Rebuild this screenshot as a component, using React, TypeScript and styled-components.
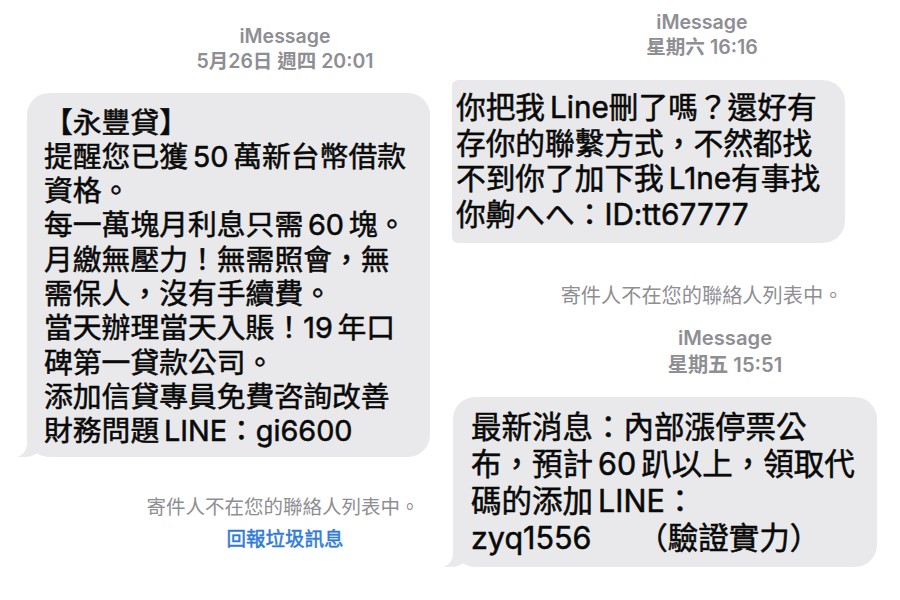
import styled, { createGlobalStyle } from "styled-components";

const GlobalStyle = createGlobalStyle`
  html, body {
    margin: 0;
    padding: 0;
    background: #fff;
  }
  body {
    width: 900px;
    height: 600px;
    overflow: hidden;
    font-family: Inter, "Noto Sans CJK TC", sans-serif;
  }
`

const Page = styled.div`
  display: grid;
  grid-template-columns: 450px 450px;
  width: 900px;
  height: 600px;
`
const Column = styled.div`
  display: flex;
  flex-direction: column;
`
const Shot = styled.section<{ $top: number }>`
  display: flex;
  flex-direction: column;
  align-items: flex-start;
  padding-top: ${p => p.$top}px;
`
const Header = styled.header<{ $shift: number; $size: number; $lh: number }>`
  align-self: stretch;
  padding-left: ${p => p.$shift}px;
  text-align: center;
  color: #8e8e93;
  font-size: ${p => p.$size}px;
  line-height: ${p => p.$lh}px;
  font-weight: 600;
`
const Bubble = styled.div<{
  $left: number; $width: number; $gap: number; $size: number; $lh: number;
  $pad: string; $radius?: string; $tail?: boolean;
}>`
  position: relative;
  box-sizing: border-box;
  margin: ${p => p.$gap}px 0 0 ${p => p.$left}px;
  width: ${p => p.$width}px;
  padding: ${p => p.$pad};
  background: #e9e9eb;
  border-radius: ${p => p.$radius || "22px"};
  color: #0a0a0a;
  font-size: ${p => p.$size}px;
  line-height: ${p => p.$lh}px;
  ${p => p.$tail && `
    &::before {
      content: "";
      position: absolute;
      left: -9px;
      bottom: 0;
      width: 24px;
      height: 22px;
      background: #e9e9eb;
      border-bottom-right-radius: 18px 12px;
    }
    &::after {
      content: "";
      position: absolute;
      left: -28px;
      bottom: 0;
      width: 28px;
      height: 22px;
      background: #fff;
      border-bottom-right-radius: 12px 14px;
    }
  `}
`
// iOS draws this text a touch heavier than Noto's regular cut
const Line = styled.div`
  position: relative;
  z-index: 1;
  white-space: pre;
  -webkit-text-stroke: 0.55px #0a0a0a;
`
const Note = styled.p<{ $shift: number; $size: number; $gap: number }>`
  align-self: stretch;
  margin: ${p => p.$gap}px 0 0;
  padding-left: ${p => p.$shift}px;
  text-align: center;
  color: #8e8e93;
  font-size: ${p => p.$size}px;
  line-height: 25px;
`
const Report = styled.a<{ $shift: number }>`
  align-self: stretch;
  display: block;
  margin-top: 7px;
  padding-left: ${p => p.$shift}px;
  text-align: center;
  color: #2f7bd6;
  font-size: 19.5px;
  line-height: 25px;
  text-decoration: none;
  -webkit-text-stroke: 0.5px #2f7bd6;
`

const loanLines = [
  "【永豐貸】",
  "提醒您已獲\u200650\u2006萬新台幣借款",
  "資格。",
  "每一萬塊月利息只需\u200660\u2006塊。",
  "月繳無壓力！無需照會，無",
  "需保人，沒有手續費。",
  "當天辦理當天入賬！19\u2006年口",
  "碑第一貸款公司。",
  "添加信貸專員免費咨詢改善",
  "財務問題\u2006LINE：gi6600",
]
const lineLines = [
  "你把我\u2006Line刪了嗎？還好有",
  "存你的聯繫方式，不然都找",
  "不到你了加下我\u2006L1ne有事找",
  "你齁へへ：ID:tt67777",
]
const stockLines = [
  "最新消息：內部漲停票公",
  "布，預計\u200660\u2006趴以上，領取代",
  "碼的添加\u2006LINE：",
  "zyq1556　　（驗證實力）",
]

export default function App() {
  return (
    <>
      <GlobalStyle />
      <Page>
        <Shot $top={24}>
          <Header $shift={120} $size={19.5} $lh={25}>
            <div>iMessage</div>
            <div>5月26日 週四 20:01</div>
          </Header>
          <Bubble $left={27} $width={403} $gap={18.5} $size={28.8} $lh={34.3} $pad="13px 8px 9px 17px" $tail>
            {loanLines.map(l => <Line key={l}>{l}</Line>)}
          </Bubble>
          <Note $shift={116} $gap={37.5} $size={19.5}>寄件人不在您的聯絡人列表中。</Note>
          <Report $shift={120} href="#">回報垃圾訊息</Report>
        </Shot>
        <Column>
          <Shot $top={9.5}>
            <Header $shift={54} $size={19.6} $lh={25}>
              <div>iMessage</div>
              <div>星期六 16:16</div>
            </Header>
            <Bubble $left={2} $width={393} $gap={20.5} $size={29.7} $lh={35.7} $pad="10px 8px 10px 4px" $radius="6px 22px 22px 6px">
              {lineLines.map(l => <Line key={l}>{l}</Line>)}
            </Bubble>
            <Note $shift={54} $gap={40.5} $size={20.2}>寄件人不在您的聯絡人列表中。</Note>
          </Shot>
          <Shot $top={16}>
            <Header $shift={100} $size={20.2} $lh={27}>
              <div>iMessage</div>
              <div>星期五 15:51</div>
            </Header>
            <Bubble $left={3} $width={424} $gap={18.5} $size={30.5} $lh={36.7} $pad="12.6px 8px 10.5px 18px" $tail>
              {stockLines.map(l => <Line key={l}>{l}</Line>)}
            </Bubble>
          </Shot>
        </Column>
      </Page>
    </>
  )
}
